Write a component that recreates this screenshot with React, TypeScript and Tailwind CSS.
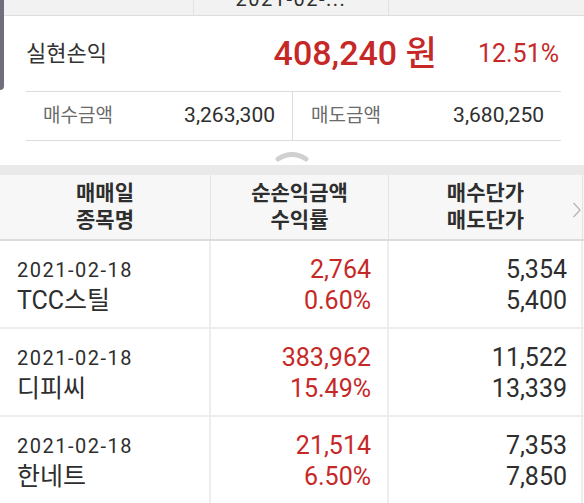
import React from 'react';

type Trade = {
    date: string;
    name: string;
    profit: string;
    rate: string;
    buyPrice: string;
    sellPrice: string;
};

const trades: Trade[] = [
    { date: '2021-02-18', name: 'TCC스틸', profit: '2,764', rate: '0.60%', buyPrice: '5,354', sellPrice: '5,400' },
    { date: '2021-02-18', name: '디피씨', profit: '383,962', rate: '15.49%', buyPrice: '11,522', sellPrice: '13,339' },
    { date: '2021-02-18', name: '한네트', profit: '21,514', rate: '6.50%', buyPrice: '7,353', sellPrice: '7,850' },
];

const font = { fontFamily: "Roboto, 'Noto Sans CJK KR', sans-serif" };

export default function App() {
    return (
        <div className="relative w-[584px] h-[503px] overflow-hidden bg-white text-[#2e2e2e]" style={font}>
            {/* scrollbar sliver on the left */}
            <div className="absolute left-0 top-0 w-[4px] h-[90px] bg-[#6f6f7b] rounded-br-[4px] z-10" />

            {/* top strip, previous row cut off */}
            <div className="h-[16px] bg-[#f2f2f2] border-b border-[#dedede] grid grid-cols-[194px_195px_1fr] overflow-hidden">
                <div className="border-r border-[#e2e2e2]" />
                <div className="border-r border-[#e2e2e2] flex justify-center">
                    <div className="mt-[-11px] text-[20px] leading-[20px] tracking-[1.5px]">2021-02-...</div>
                </div>
                <div />
            </div>

            {/* summary */}
            <div className="ml-[26px] w-[535px]">
                <div className="h-[75px] flex items-center">
                    <div className="text-[22px] text-[#333]">실현손익</div>
                    <div className="ml-auto text-[34px] font-medium text-[#c62828]">408,240 원</div>
                    <div className="ml-[41px] mr-[2px] text-[25px] text-[#c62828]">12.51%</div>
                </div>
                <div className="h-[50px] grid grid-cols-[267px_268px] border-y border-[#dcdcdc]">
                    <div className="flex items-center pl-[17px] pr-[17px] border-r border-[#dcdcdc]">
                        <span className="text-[19px] text-[#6a6a6a]">매수금액</span>
                        <span className="ml-auto text-[21px]">3,263,300</span>
                    </div>
                    <div className="flex items-center pl-[18px] pr-[17px]">
                        <span className="text-[19px] text-[#6a6a6a]">매도금액</span>
                        <span className="ml-auto text-[21px]">3,680,250</span>
                    </div>
                </div>
            </div>

            {/* collapse handle */}
            <div className="h-[24px] flex items-start justify-center pt-[9px]">
                <svg width="36" height="12" viewBox="0 0 36 12">
                    <path d="M4 9 Q18 0 32 9" stroke="#d0d0d0" strokeWidth="5" fill="none" strokeLinecap="round" strokeLinejoin="round" />
                </svg>
            </div>

            <div className="h-[10px] bg-[#e9e9e9]" />

            {/* table header */}
            <div className="relative h-[66px] bg-[#f7f7f7] border-b-2 border-[#dcdcdc] grid grid-cols-[211px_178px_194px_1fr] text-[21px] font-bold leading-[27px] text-[#2e2e2e]">
                <div className="flex flex-col items-center justify-center border-r border-[#e4e4e4]">
                    <span>매매일</span>
                    <span>종목명</span>
                </div>
                <div className="flex flex-col items-center justify-center border-r border-[#e4e4e4]">
                    <span>순손익금액</span>
                    <span>수익률</span>
                </div>
                <div className="flex flex-col items-center justify-center border-r border-[#e4e4e4]">
                    <span>매수단가</span>
                    <span>매도단가</span>
                </div>
                <div />
                <svg width="10" height="16" viewBox="0 0 10 16" className="absolute left-[572px] top-[27px]">
                    <path d="M1.5 1 L8 8 L1.5 15" stroke="#b8b8b8" strokeWidth="1.4" fill="none" />
                </svg>
            </div>

            {/* rows */}
            {trades.map(t => (
                <div key={t.name} className="h-[88px] grid grid-cols-[211px_178px_194px_1fr] border-b-2 border-[#eeeeee]">
                    <div className="flex flex-col justify-center pl-[17px] pt-[2px] border-r-2 border-[#eeeeee]">
                        <span className="text-[20px] leading-[30px] tracking-[1.5px]">{t.date}</span>
                        <span className="text-[25px] leading-[31px]">{t.name}</span>
                    </div>
                    <div className="flex flex-col justify-center items-end pr-[16px] pt-[2px] border-r-2 border-[#eeeeee] text-[25px] leading-[31px] text-[#c62828]">
                        <span>{t.profit}</span>
                        <span>{t.rate}</span>
                    </div>
                    <div className="flex flex-col justify-center items-end pr-[14px] pt-[2px] border-r-2 border-[#eeeeee] text-[25px] leading-[31px]">
                        <span>{t.buyPrice}</span>
                        <span>{t.sellPrice}</span>
                    </div>
                    <div />
                </div>
            ))}
        </div>
    );
}
